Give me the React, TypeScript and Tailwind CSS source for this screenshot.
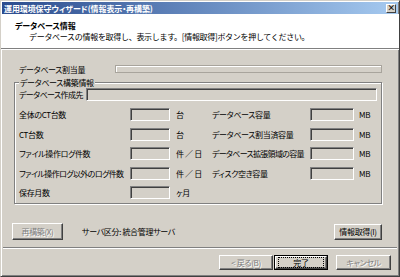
import React from "react";

const font = "font-['Noto_Sans_CJK_JP',sans-serif] [font-feature-settings:'palt']";

function Btn({
  label,
  disabled,
  primary,
  className = "",
}: {
  label: string;
  disabled?: boolean;
  primary?: boolean;
  className?: string;
}) {
  return (
    <div
      className={`flex items-center justify-center whitespace-nowrap bg-[#d4d0c8] ${
        primary ? "border border-black" : ""
      } ${className}`}
    >
      <div
        className={`flex h-full w-full items-center justify-center border-t border-l border-t-white border-l-white border-r border-b border-r-[#404040] border-b-[#404040] shadow-[inset_-1px_-1px_0_#808080] ${
          disabled ? "text-[#808080] [text-shadow:1px_1px_0_#fff]" : "text-black"
        }`}
      >
        {primary ? (
          <span className="flex h-[9px] w-[44px] items-center justify-center outline outline-1 outline-dotted outline-black">
            {label}
          </span>
        ) : (
          label
        )}
      </div>
    </div>
  );
}

function NumBox({ className = "w-[40px]" }: { className?: string }) {
  return (
    <div
      className={`h-[13px] shrink-0 border-t border-l border-t-[#808080] border-l-[#808080] border-r border-b border-r-white border-b-white shadow-[inset_1px_1px_0_#404040] bg-[#d4d0c8] ${className}`}
    />
  );
}

function Row({
  left,
  leftUnit,
  right,
}: {
  left: string;
  leftUnit: string;
  right?: string;
}) {
  return (
    <div className="flex h-[13px] items-center whitespace-nowrap">
      <span className={`w-[111px] shrink-0 ${left.length > 12 ? "tracking-[-0.6px]" : ""}`}>{left}</span>
      <NumBox />
      <span className="ml-[6px] w-[36px] shrink-0">{leftUnit}</span>
      {right && (
        <>
          <span className={`w-[98px] shrink-0 ${right.length > 11 ? "tracking-[-0.7px]" : ""}`}>{right}</span>
          <NumBox className="w-[44px]" />
          <span className="ml-[5px]">MB</span>
        </>
      )}
    </div>
  );
}

export default function App() {
  return (
    <div
      className={`flex h-[277px] w-[400px] flex-col bg-[#d4d0c8] text-[8px] leading-[11px] tracking-[-0.35px] text-black ${font} border border-t-[#d4d0c8] border-l-[#d4d0c8] border-r-[#404040] border-b-[#404040] shadow-[inset_1px_1px_0_#fff,inset_-1px_-1px_0_#808080]`}
    >
      {/* Title bar */}
      <div className="mx-[1px] mt-[1px] flex h-[12px] shrink-0 items-center justify-between bg-gradient-to-r from-[#2c4c8e] to-[#a6caf0] pl-[2px] pr-[2px]">
        <span className="whitespace-nowrap font-bold tracking-[-0.1px] text-white">運用環境保守ウィザード(情報表示・再構築)</span>
        <div className="flex h-[9px] w-[10px] items-center justify-center border-t border-l border-t-white border-l-white border-r border-b border-r-[#404040] border-b-[#404040] bg-[#d4d0c8] text-[8px] font-bold leading-none">
          ×
        </div>
      </div>

      {/* Header */}
      <div className="flex h-[35px] shrink-0 flex-col justify-center whitespace-nowrap bg-white pl-[14px] border-b border-b-[#808080] shadow-[0_1px_0_#fff]">
        <span className="font-bold tracking-[-0.1px]">データベース情報</span>
        <span className="pl-[14px] tracking-[-0.3px] [font-feature-settings:normal]">
          データベースの情報を取得し、表示します。[情報取得]ボタンを押してください。
        </span>
      </div>

      {/* Body */}
      <div className="flex flex-1 flex-col whitespace-nowrap pl-[13px] pr-[17px] pt-[16px]">
        <div className="flex h-[8px] items-center pl-[5px]">
          <span className="w-[96px] shrink-0">データベース割当量</span>
          <div className="h-[8px] flex-1 border border-[#a8a49c] shadow-[inset_1px_1px_0_#fff]" />
        </div>

        <fieldset className="mt-[4px] border border-[#808080] px-[4px] pb-[4px] shadow-[inset_1px_1px_0_#fff,1px_1px_0_#fff]">
          <legend className="bg-[#d4d0c8] px-[1px] leading-[11px]">データベース構築情報</legend>
          <div className="flex h-[13px] items-center">
            <span className="w-[67px] shrink-0 tracking-[-0.6px]">データベース作成先</span>
            <div className="h-[13px] flex-1 border-t border-l border-t-[#808080] border-l-[#808080] border-r border-b border-r-white border-b-white shadow-[inset_1px_1px_0_#404040]" />
          </div>
          <div className="mt-[7px] flex flex-col gap-[6.5px]">
            <Row left="全体のCT台数" leftUnit="台" right="データベース容量" />
            <Row left="CT台数" leftUnit="台" right="データベース割当済容量" />
            <Row left="ファイル操作ログ件数" leftUnit="件 ／ 日" right="データベース拡張領域の容量" />
            <Row left="ファイル操作ログ以外のログ件数" leftUnit="件 ／ 日" right="ディスク空き容量" />
            <Row left="保存月数" leftUnit="ヶ月" />
          </div>
        </fieldset>

        <div className="mt-[19px] flex items-center">
          <Btn label="再構築(X)" disabled className="ml-[-2px] h-[17px] w-[51px]" />
          <span className="ml-[19px]">サーバ区分: 統合管理サーバ</span>
          <Btn label="情報取得(I)" className="ml-auto h-[16px] w-[48px]" />
        </div>
      </div>

      {/* Separator */}
      <div className="mx-[2px] h-[2px] shrink-0 border-t border-t-[#808080] border-b border-b-white" />

      {/* Footer buttons */}
      <div className="flex h-[27px] shrink-0 items-start justify-end pr-[8px] pt-[6px]">
        <Btn label="< 戻る(B)" disabled className="h-[15px] w-[54px]" />
        <Btn label="完了" primary className="ml-[1px] h-[15px] w-[54px]" />
        <Btn label="キャンセル" disabled className="ml-[8px] h-[15px] w-[55px]" />
      </div>
    </div>
  );
}
